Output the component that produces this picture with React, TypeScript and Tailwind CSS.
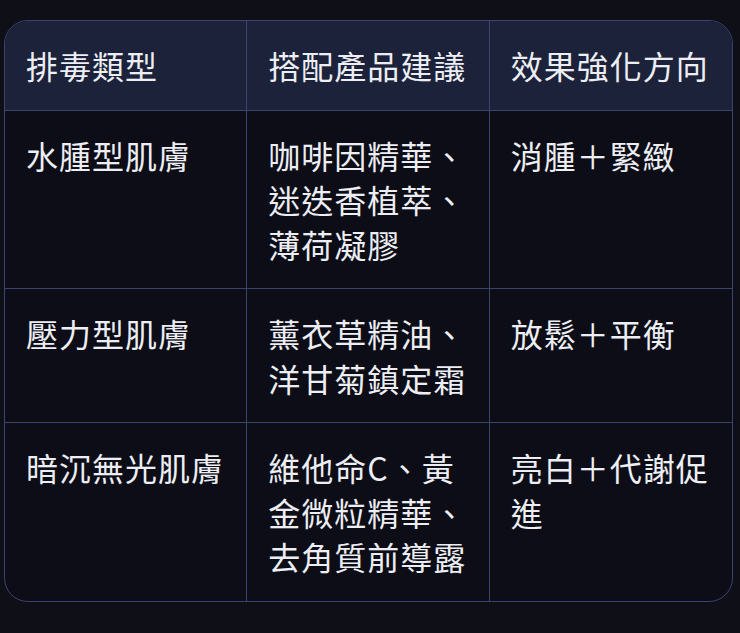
import React from "react";

type Row = {
  type: string;
  products: string[];
  effect: string[];
};

const headers = ["排毒類型", "搭配產品建議", "效果強化方向"];

const rows: Row[] = [
  {
    type: "水腫型肌膚",
    products: ["咖啡因精華、", "迷迭香植萃、", "薄荷凝膠"],
    effect: ["消腫＋緊緻"],
  },
  {
    type: "壓力型肌膚",
    products: ["薰衣草精油、", "洋甘菊鎮定霜"],
    effect: ["放鬆＋平衡"],
  },
  {
    type: "暗沉無光肌膚",
    products: ["維他命C、黃", "金微粒精華、", "去角質前導露"],
    effect: ["亮白＋代謝促", "進"],
  },
];

function Cell({
  lines,
  last,
  bottom,
}: {
  lines: string[];
  last?: boolean;
  bottom?: boolean;
}) {
  return (
    <div
      className={`px-[21px] py-[22px] ${last ? "" : "border-r border-[#3d4370]"} ${
        bottom ? "" : "border-b border-[#3d4370]"
      }`}
    >
      {lines.map((line) => (
        <div key={line} className="whitespace-nowrap">
          {line}
        </div>
      ))}
    </div>
  );
}

export default function App() {
  return (
    <div
      className="min-h-[633px] w-[740px] bg-[#0e0f17] pl-[4px] pt-[20px] text-[32px] leading-[44.5px] tracking-[1px] text-[#eceef4]"
      style={{ fontFamily: '"Noto Sans CJK TC", "Noto Sans", sans-serif' }}
    >
      <div className="w-[729px] overflow-hidden rounded-[24px] border border-[#3d4370] bg-[#0c0d16]">
        <div className="grid grid-cols-3 bg-[#1c2239]">
          {headers.map((h, i) => (
            <Cell key={h} lines={[h]} last={i === 2} />
          ))}
        </div>
        {rows.map((row, r) => (
          <div key={row.type} className="grid grid-cols-3">
            <Cell lines={[row.type]} bottom={r === rows.length - 1} />
            <Cell lines={row.products} bottom={r === rows.length - 1} />
            <Cell lines={row.effect} last bottom={r === rows.length - 1} />
          </div>
        ))}
      </div>
    </div>
  );
}
